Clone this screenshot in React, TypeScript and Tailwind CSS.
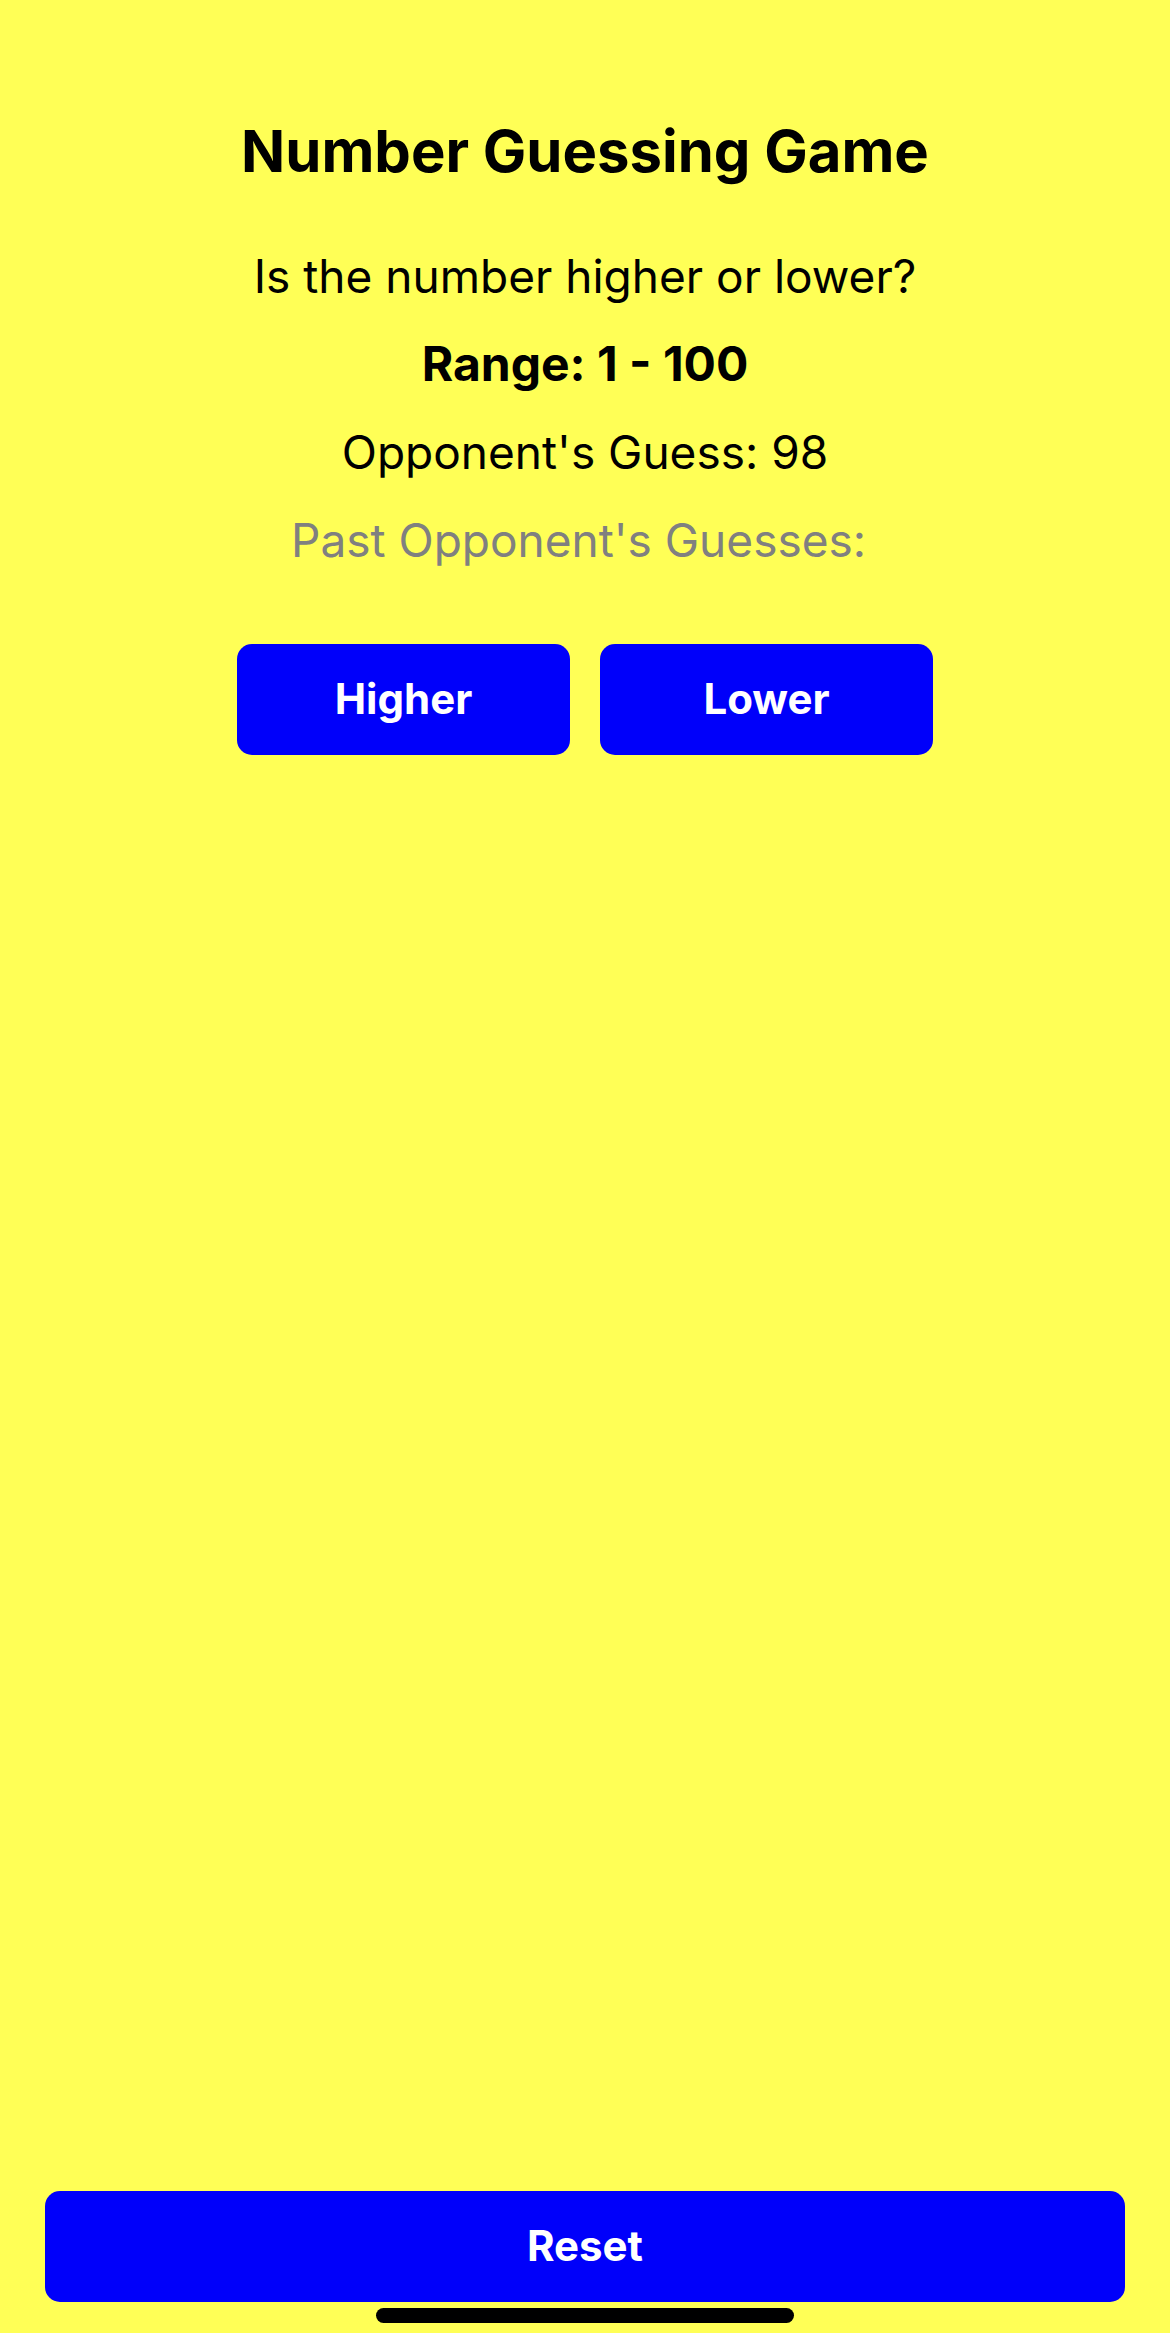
export default function App() {
  const button =
    "flex h-[111px] items-center justify-center rounded-[15px] bg-[#0000fa] pb-[2px] text-[42px] font-bold leading-[50px] text-white";
  return (
    <main className="relative flex min-h-screen flex-col items-center bg-[#ffff56] px-[45px] pt-[113px] pb-[31px] text-center font-['Inter','Liberation_Sans',sans-serif] text-[46px] text-black">
      <h1 className="text-[58px] font-bold leading-[76px]">Number Guessing Game</h1>
      <div className="mt-[58px] flex flex-col gap-[30px] leading-[58px]">
        <p>Is the number higher or lower?</p>
        <p className="text-[48px] font-bold leading-[58px]">Range: 1 - 100</p>
        <p>Opponent's Guess: 98</p>
        <p className="whitespace-pre text-[#808080]">{"Past Opponent's Guesses: "}</p>
      </div>
      <div className="mt-[75px] grid w-full max-w-[696px] grid-cols-2 gap-[30px]">
        <button type="button" className={button}>Higher</button>
        <button type="button" className={button}>Lower</button>
      </div>
      <button type="button" className={button + " mt-auto w-full"}>Reset</button>
      <div className="absolute bottom-[10px] left-1/2 h-[15px] w-[418px] -translate-x-1/2 rounded-full bg-black" />
    </main>
  );
}
